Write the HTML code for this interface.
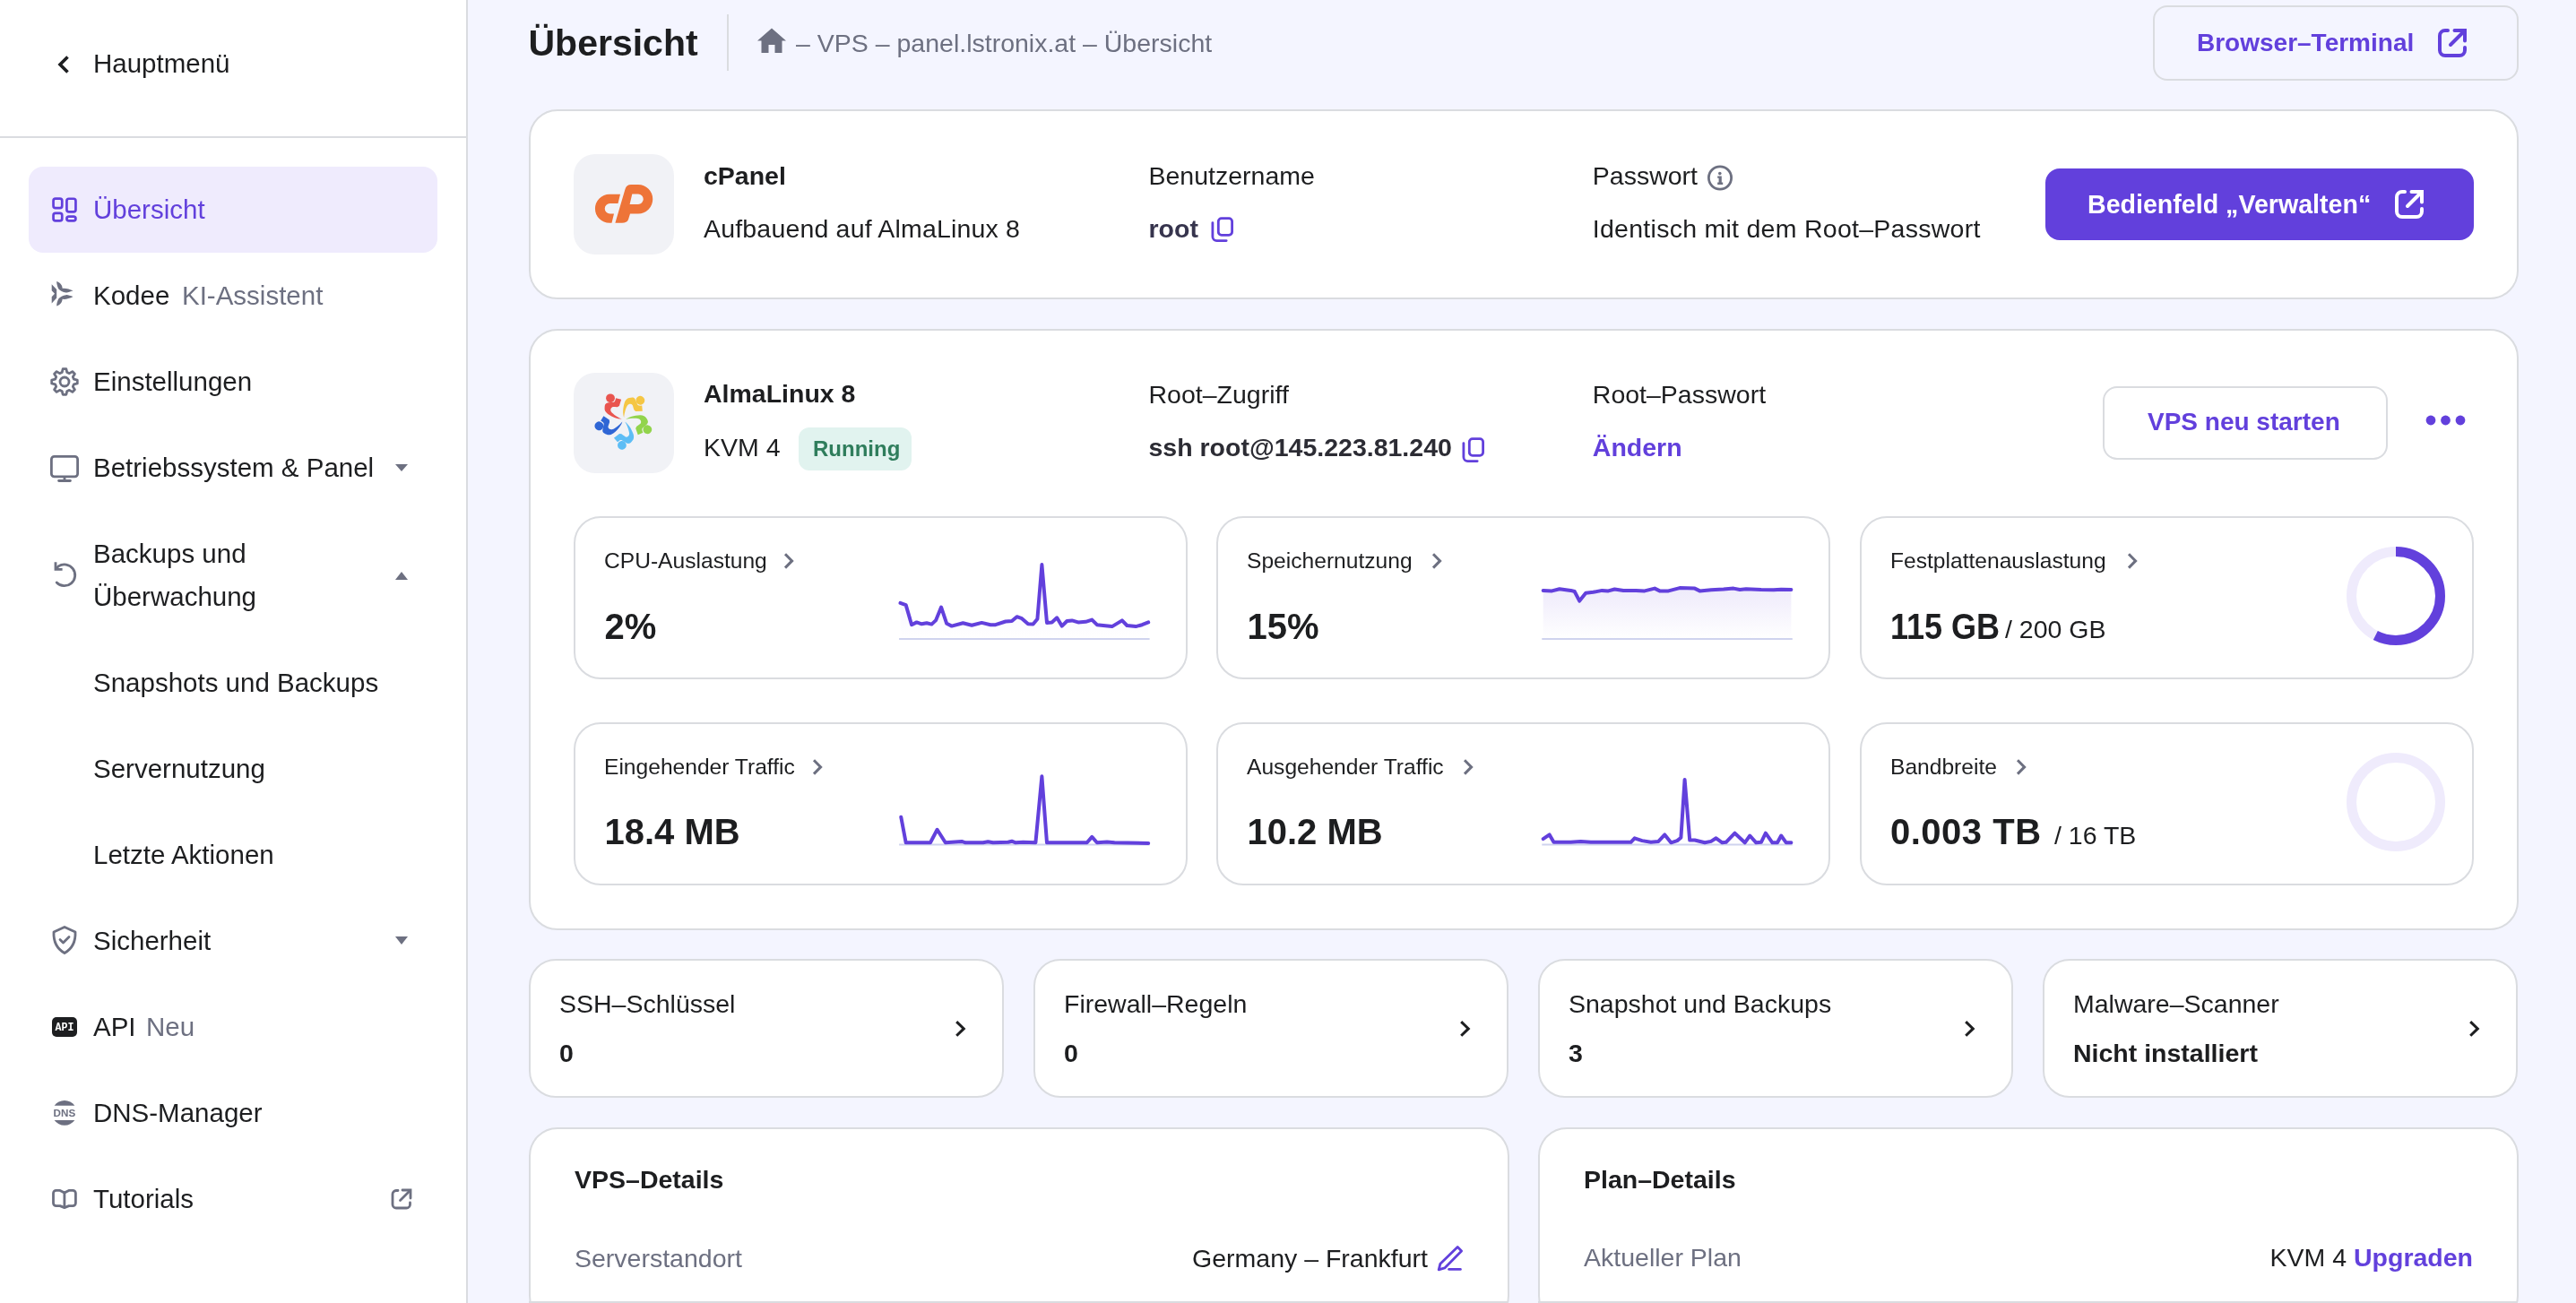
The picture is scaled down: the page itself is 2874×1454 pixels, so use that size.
<!DOCTYPE html>
<html><head><meta charset="utf-8"><title>Übersicht</title>
<style>
html,body{margin:0;padding:0;}
body{width:2874px;height:1454px;overflow:hidden;background:#f4f5ff;position:relative;font-family:"Liberation Sans",sans-serif;}
.t{position:absolute;white-space:nowrap;font-weight:400;}
.w{font-weight:700;}
.b{position:absolute;box-sizing:border-box;}
.s{position:absolute;}
svg{overflow:visible;}
</style></head><body>
<div id="root" style="position:absolute;left:0;top:0;width:2874px;height:1454px;will-change:transform;">
<div class="b" style="left:0px;top:0px;width:522px;height:1454px;background:#fff;border-right:2px solid #dadce0;"></div>
<div class="b" style="left:0px;top:152px;width:521px;height:2px;background:#dadce0;"></div>
<svg class="s" style="left:60px;top:58px;" width="24" height="28" viewBox="0 0 24 28" fill="none"><path d="M15.5 5.5 L7 14 L15.5 22.5" stroke="#1d1e20" stroke-width="3.6" stroke-linecap="butt" stroke-linejoin="miter"/></svg>
<div class="t" style="left:104.0px;top:56.0px;font-size:29.5px;line-height:29.5px;color:#1d1e20;">Hauptmenü</div>
<div class="b" style="left:32px;top:186px;width:456px;height:96px;background:#efebfd;border-radius:16px;"></div>
<svg class="s" style="left:56px;top:218px;" width="32" height="32" viewBox="0 0 32 32" fill="none"><g stroke="#6240dc" stroke-width="2.7"><rect x="3.55" y="3.55" width="9.7" height="10.5" rx="2.4"/><rect x="3.55" y="19.85" width="9.7" height="8.6" rx="2.4"/><rect x="18.45" y="3.75" width="10" height="14.7" rx="2.4"/><rect x="18.45" y="23.65" width="10" height="4.8" rx="2.4"/></g></svg>
<div class="t" style="left:104.0px;top:218.5px;font-size:29.5px;line-height:29.5px;color:#6240dc;">Übersicht</div>
<svg class="s" style="left:56px;top:313px;" width="30" height="32" viewBox="0 0 30 32" fill="none"><g fill="#6d7081"><path d="M1.7 4.2 L7.2 10 L7.2 19.6 L1.7 25.4 L1.7 18.3 L5 14.8 L1.7 11.3 Z"/><path d="M7.2 1.1 C11 2.5 13.5 5 13.6 8.8 C17 8.3 22 9.5 25.6 11.6 C22 12.5 19 14 17.6 13.4 C14 13 11 11 9.4 9.4 C8 7 7.2 4 7.2 1.1 Z"/><path d="M7.2 28.5 C11 27.1 13.5 24.6 13.6 20.8 C17 21.3 22 20.1 25.6 18 C22 17.1 19 15.6 17.6 16.2 C14 16.6 11 18.6 9.4 20.2 C8 22.6 7.2 25.6 7.2 28.5 Z"/></g></svg>
<div class="t" style="left:104.0px;top:314.5px;font-size:29.5px;line-height:29.5px;color:#1d1e20;">Kodee</div>
<div class="t" style="left:203.0px;top:314.5px;font-size:29.5px;line-height:29.5px;color:#6d7081;">KI-Assistent</div>
<svg class="s" style="left:55px;top:409px;" width="34" height="34" viewBox="0 0 34 34" fill="none"><g stroke="#6d7081" stroke-width="2.8" stroke-linejoin="round"><path d="M14.20 6.57 L15.12 2.72 L18.88 2.72 L19.80 6.57 L22.40 7.65 L25.77 5.58 L28.42 8.23 L26.35 11.60 L27.43 14.20 L31.28 15.12 L31.28 18.88 L27.43 19.80 L26.35 22.40 L28.42 25.77 L25.77 28.42 L22.40 26.35 L19.80 27.43 L18.88 31.28 L15.12 31.28 L14.20 27.43 L11.60 26.35 L8.23 28.42 L5.58 25.77 L7.65 22.40 L6.57 19.80 L2.72 18.88 L2.72 15.12 L6.57 14.20 L7.65 11.60 L5.58 8.23 L8.23 5.58 L11.60 7.65 Z"/><circle cx="17" cy="17" r="5"/></g></svg>
<div class="t" style="left:104.0px;top:410.5px;font-size:29.5px;line-height:29.5px;color:#1d1e20;">Einstellungen</div>
<svg class="s" style="left:55px;top:507px;" width="34" height="34" viewBox="0 0 34 34" fill="none"><g stroke="#6d7081" stroke-width="2.8"><rect x="2.4" y="2.4" width="29.2" height="22.5" rx="3.2"/><path d="M17 25 V29.5"/><path d="M10.6 29.5 H23.4" stroke-linecap="round"/></g></svg>
<div class="t" style="left:104.0px;top:506.5px;font-size:29.5px;line-height:29.5px;color:#1d1e20;">Betriebssystem &amp; Panel</div>
<svg class="s" style="left:440px;top:517px;" width="16" height="12" viewBox="0 0 16 12" fill="none"><path d="M1 1 H15 L8 9 Z" fill="#6d7081"/></svg>
<svg class="s" style="left:58px;top:625px;" width="30" height="32" viewBox="0 0 30 32" fill="none"><g stroke="#6d7081" stroke-width="2.8" fill="none"><path d="M4.8 9.6 L7.2 6.9 A11.9 11.9 0 1 1 5.2 25" stroke-linecap="round"/><path d="M4 2.2 V10.4 H11.6" stroke-linejoin="miter"/></g></svg>
<div class="t" style="left:104.0px;top:602.5px;font-size:29.5px;line-height:29.5px;color:#1d1e20;">Backups und</div>
<div class="t" style="left:104.0px;top:650.5px;font-size:29.5px;line-height:29.5px;color:#1d1e20;">Überwachung</div>
<svg class="s" style="left:440px;top:636px;" width="16" height="12" viewBox="0 0 16 12" fill="none"><path d="M1 11 H15 L8 2 Z" fill="#6d7081"/></svg>
<div class="t" style="left:104.0px;top:746.5px;font-size:29.5px;line-height:29.5px;color:#1d1e20;">Snapshots und Backups</div>
<div class="t" style="left:104.0px;top:842.5px;font-size:29.5px;line-height:29.5px;color:#1d1e20;">Servernutzung</div>
<div class="t" style="left:104.0px;top:938.5px;font-size:29.5px;line-height:29.5px;color:#1d1e20;">Letzte Aktionen</div>
<svg class="s" style="left:55px;top:1032px;" width="34" height="34" viewBox="0 0 34 34" fill="none"><g stroke="#6d7081" stroke-width="2.8" stroke-linejoin="round" stroke-linecap="round"><path d="M17 2.5 L29 8 C29.5 19 25 27 17 31.5 C9 27 4.5 19 5 8 Z"/><path d="M12 16.5 L15.5 20 L22 13.5"/></g></svg>
<div class="t" style="left:104.0px;top:1034.5px;font-size:29.5px;line-height:29.5px;color:#1d1e20;">Sicherheit</div>
<svg class="s" style="left:440px;top:1044px;" width="16" height="12" viewBox="0 0 16 12" fill="none"><path d="M1 1 H15 L8 10 Z" fill="#6d7081"/></svg>
<svg class="s" style="left:58px;top:1135px;" width="28" height="22" viewBox="0 0 28 22" fill="none"><rect x="0" y="0" width="28" height="22" rx="5" fill="#1d1e20"/><text x="3.6" y="15.3" textLength="21" lengthAdjust="spacingAndGlyphs" font-family="Liberation Mono" font-weight="700" font-size="12.5" fill="#fff">API</text></svg>
<div class="t" style="left:104.0px;top:1130.5px;font-size:29.5px;line-height:29.5px;color:#1d1e20;">API</div>
<div class="t" style="left:163.0px;top:1130.5px;font-size:29.5px;line-height:29.5px;color:#6d7081;">Neu</div>
<svg class="s" style="left:56px;top:1226px;" width="32" height="34" viewBox="0 0 32 34" fill="none"><g fill="#6d7081"><path d="M4.65 7.8 A14 14 0 0 1 27.35 7.8 Z"/><path d="M4.65 23.9 A14 14 0 0 0 27.35 23.9 Z"/></g><text x="3.6" y="20" textLength="24.6" lengthAdjust="spacingAndGlyphs" font-family="Liberation Sans" font-weight="700" font-size="11.3" fill="#6d7081">DNS</text></svg>
<div class="t" style="left:104.0px;top:1226.5px;font-size:29.5px;line-height:29.5px;color:#1d1e20;">DNS-Manager</div>
<svg class="s" style="left:56px;top:1325px;" width="32" height="28" viewBox="0 0 32 28" fill="none"><g stroke="#6d7081" stroke-width="2.8" stroke-linejoin="round"><path d="M15.9 6 L11 3.4 H6.7 A3.2 3.2 0 0 0 3.5 6.6 V17.4 A3.2 3.2 0 0 0 6.7 20.6 H11 L15.9 22.6 L20.8 20.6 H25.2 A3.2 3.2 0 0 0 28.4 17.4 V6.6 A3.2 3.2 0 0 0 25.2 3.4 H20.8 Z"/><path d="M15.9 6 V22.3"/></g></svg>
<div class="t" style="left:104.0px;top:1322.5px;font-size:29.5px;line-height:29.5px;color:#1d1e20;">Tutorials</div>
<svg class="s" style="left:435px;top:1325px;" width="26" height="26" viewBox="0 0 26 26" fill="none"><g stroke="#6d7081" stroke-width="2.8" stroke-linecap="round" fill="none"><path d="M9 3.5 H7 A4 4 0 0 0 3 7.5 V19 A4 4 0 0 0 7 23 H18.5 A4 4 0 0 0 22.5 19 V17"/><path d="M14 3 H23 V12"/><path d="M22.5 3.5 L11.5 14.5"/></g></svg>
<div class="t w" style="left:589.5px;top:27.8px;font-size:41px;line-height:41px;color:#1d1e20;">Übersicht</div>
<div class="b" style="left:811px;top:16px;width:2px;height:63px;background:#dadce0;"></div>
<svg class="s" style="left:843px;top:30px;" width="36" height="30" viewBox="0 0 36 30" fill="none"><path d="M18 1.5 L34 15.5 H29.5 V29 H21.5 V20 H14.5 V29 H6.5 V15.5 H2 Z" fill="#6d7081"/></svg>
<div class="t" style="left:888.0px;top:33.9px;font-size:28.5px;line-height:28.5px;color:#6d7081;">– VPS – panel.lstronix.at – Übersicht</div>
<div class="b" style="left:2402px;top:6px;width:408px;height:84px;border:2px solid #dadce0;border-radius:16px;"></div>
<div class="t w" style="left:2451.0px;top:33.8px;font-size:28px;line-height:28px;color:#6240dc;">Browser–Terminal</div>
<svg class="s" style="left:2720px;top:32px;" width="32" height="32" viewBox="0 0 32 32" fill="none"><g stroke="#6240dc" stroke-width="4" stroke-linecap="round" fill="none"><path d="M11 2 H8 A6 6 0 0 0 2 8 V24 A6 6 0 0 0 8 30 H24 A6 6 0 0 0 30 24 V21"/><path d="M18.5 2 H30 V13.5"/><path d="M29 3 L14 18"/></g></svg>
<div class="b" style="left:589.5px;top:122px;width:2220.5px;height:212px;background:#fff;border:2px solid #dadce0;border-radius:32px;"></div>
<div class="b" style="left:640px;top:172px;width:112px;height:112px;background:#f1f2f6;border-radius:24px;"></div>
<svg class="s" style="left:640px;top:172px;" width="112" height="112" viewBox="0 0 112 112" fill="none"><g fill="#ee7438"><path d="M52 44.7 L49.5 55 L40.5 55 A5.75 5.75 0 0 0 40.5 66.5 L45 66.5 L42.5 76.8 L40 76.8 A16 16 0 0 1 40 44.7 Z"/><path fill-rule="evenodd" d="M57.5 39 Q59 34 64 34 L72 34 A16.25 16.25 0 0 1 72 66.5 L63 66.5 L61 73 Q59.5 76.8 54 76.8 L46.4 76.8 Z M65.3 44.5 L72 44.5 A5.75 5.75 0 0 1 72 56 L62.6 56 Z"/></g></svg>
<div class="t w" style="left:785.0px;top:181.9px;font-size:28.5px;line-height:28.5px;color:#1d1e20;">cPanel</div>
<div class="t" style="left:785.0px;top:240.9px;font-size:28.5px;line-height:28.5px;color:#1d1e20;letter-spacing:0.18px">Aufbauend auf AlmaLinux 8</div>
<div class="t" style="left:1281.5px;top:181.9px;font-size:28.5px;line-height:28.5px;color:#1d1e20;">Benutzername</div>
<div class="t w" style="left:1281.5px;top:240.9px;font-size:28.5px;line-height:28.5px;color:#36344d;">root</div>
<svg class="s" style="left:1350px;top:241px;" width="28" height="30" viewBox="0 0 28 30" fill="none"><g stroke="#6240dc" stroke-width="2.8" fill="none" stroke-linecap="round"><rect x="9.3" y="2.6" width="15.3" height="18.7" rx="3.5"/><path d="M2.9 7.6 V23 A4.6 4.6 0 0 0 7.5 27.6 H18.2"/></g></svg>
<div class="t" style="left:1776.8px;top:181.9px;font-size:28.5px;line-height:28.5px;color:#1d1e20;">Passwort</div>
<svg class="s" style="left:1904px;top:184px;" width="30" height="30" viewBox="0 0 30 30" fill="none"><circle cx="15" cy="14.5" r="12.6" stroke="#6d7081" stroke-width="2.8"/><circle cx="14.8" cy="9.6" r="1.8" fill="#6d7081"/><path d="M12.2 12.6 H16.8 V19.6 H18.2 V22 H12.2 V19.6 H13.6 V14.8 H12.2 Z" fill="#6d7081"/></svg>
<div class="t" style="left:1776.8px;top:240.9px;font-size:28.5px;line-height:28.5px;color:#1d1e20;letter-spacing:0.27px">Identisch mit dem Root–Passwort</div>
<div class="b" style="left:2282px;top:188px;width:478px;height:80px;background:#6240dc;border-radius:16px;"></div>
<div class="t w" style="left:2329.0px;top:213.5px;font-size:28.6px;line-height:28.6px;color:#fff;">Bedienfeld „Verwalten“</div>
<svg class="s" style="left:2672px;top:212px;" width="32" height="32" viewBox="0 0 32 32" fill="none"><g stroke="#fff" stroke-width="4" stroke-linecap="round" fill="none"><path d="M11 2 H8 A6 6 0 0 0 2 8 V24 A6 6 0 0 0 8 30 H24 A6 6 0 0 0 30 24 V21"/><path d="M18.5 2 H30 V13.5"/><path d="M29 3 L14 18"/></g></svg>
<div class="b" style="left:589.5px;top:367px;width:2220.5px;height:671px;background:#fff;border:2px solid #dadce0;border-radius:32px;"></div>
<div class="b" style="left:640px;top:416px;width:112px;height:112px;background:#f1f2f6;border-radius:24px;"></div>
<svg class="s" style="left:640px;top:416px;" width="112" height="112" viewBox="0 0 112 112" fill="none"><g fill="#e9554f" transform="rotate(0 56 52.5)"><circle cx="41" cy="28.3" r="4.9"/><path d="M47.1 28.3 L53.1 29.7 L50.9 37.1 L48.7 38.2 C46 38.2 44 38 43.2 38.2 C41.2 39 40.6 42 42.1 43.8 C44 46 48.5 49.5 53.7 51.5 C50 51.8 44 50 38.2 46 C35.5 44 34.2 41.5 34.6 39.3 C34.6 37 35 35.5 35.5 34.9 C36.5 33.8 37.5 33.4 38.8 33.3 L44.9 32.7 C46 32 46.3 31 46.5 30.5 Z"/></g><g fill="#f5c644" transform="rotate(72 56 52.5)"><circle cx="41" cy="28.3" r="4.9"/><path d="M47.1 28.3 L53.1 29.7 L50.9 37.1 L48.7 38.2 C46 38.2 44 38 43.2 38.2 C41.2 39 40.6 42 42.1 43.8 C44 46 48.5 49.5 53.7 51.5 C50 51.8 44 50 38.2 46 C35.5 44 34.2 41.5 34.6 39.3 C34.6 37 35 35.5 35.5 34.9 C36.5 33.8 37.5 33.4 38.8 33.3 L44.9 32.7 C46 32 46.3 31 46.5 30.5 Z"/></g><g fill="#92d44c" transform="rotate(144 56 52.5)"><circle cx="41" cy="28.3" r="4.9"/><path d="M47.1 28.3 L53.1 29.7 L50.9 37.1 L48.7 38.2 C46 38.2 44 38 43.2 38.2 C41.2 39 40.6 42 42.1 43.8 C44 46 48.5 49.5 53.7 51.5 C50 51.8 44 50 38.2 46 C35.5 44 34.2 41.5 34.6 39.3 C34.6 37 35 35.5 35.5 34.9 C36.5 33.8 37.5 33.4 38.8 33.3 L44.9 32.7 C46 32 46.3 31 46.5 30.5 Z"/></g><g fill="#5dbdf5" transform="rotate(216 56 52.5)"><circle cx="41" cy="28.3" r="4.9"/><path d="M47.1 28.3 L53.1 29.7 L50.9 37.1 L48.7 38.2 C46 38.2 44 38 43.2 38.2 C41.2 39 40.6 42 42.1 43.8 C44 46 48.5 49.5 53.7 51.5 C50 51.8 44 50 38.2 46 C35.5 44 34.2 41.5 34.6 39.3 C34.6 37 35 35.5 35.5 34.9 C36.5 33.8 37.5 33.4 38.8 33.3 L44.9 32.7 C46 32 46.3 31 46.5 30.5 Z"/></g><g fill="#2f66d5" transform="rotate(288 56 52.5)"><circle cx="41" cy="28.3" r="4.9"/><path d="M47.1 28.3 L53.1 29.7 L50.9 37.1 L48.7 38.2 C46 38.2 44 38 43.2 38.2 C41.2 39 40.6 42 42.1 43.8 C44 46 48.5 49.5 53.7 51.5 C50 51.8 44 50 38.2 46 C35.5 44 34.2 41.5 34.6 39.3 C34.6 37 35 35.5 35.5 34.9 C36.5 33.8 37.5 33.4 38.8 33.3 L44.9 32.7 C46 32 46.3 31 46.5 30.5 Z"/></g></svg>
<div class="t w" style="left:785.0px;top:424.9px;font-size:28.5px;line-height:28.5px;color:#1d1e20;">AlmaLinux 8</div>
<div class="t" style="left:785.0px;top:484.9px;font-size:28.5px;line-height:28.5px;color:#1d1e20;">KVM 4</div>
<div class="b" style="left:891px;top:477px;width:126px;height:48px;background:#e1f3ef;border-radius:12px;"></div>
<div class="t w" style="left:907.0px;top:489.0px;font-size:24px;line-height:24px;color:#2f7d5c;">Running</div>
<div class="t" style="left:1281.5px;top:425.5px;font-size:28.5px;line-height:28.5px;color:#1d1e20;">Root–Zugriff</div>
<div class="t w" style="left:1281.5px;top:485.1px;font-size:28.5px;line-height:28.5px;color:#2c2c34;">ssh root@145.223.81.240</div>
<svg class="s" style="left:1630px;top:487px;" width="28" height="30" viewBox="0 0 28 30" fill="none"><g stroke="#6240dc" stroke-width="2.8" fill="none" stroke-linecap="round"><rect x="9.3" y="2.6" width="15.3" height="18.7" rx="3.5"/><path d="M2.9 7.6 V23 A4.6 4.6 0 0 0 7.5 27.6 H18.2"/></g></svg>
<div class="t" style="left:1776.8px;top:425.5px;font-size:28.5px;line-height:28.5px;color:#1d1e20;">Root–Passwort</div>
<div class="t w" style="left:1776.8px;top:485.1px;font-size:28.5px;line-height:28.5px;color:#6240dc;">Ändern</div>
<div class="b" style="left:2346px;top:431px;width:318px;height:82px;border:2px solid #dadce0;border-radius:16px;background:#fff;"></div>
<div class="t w" style="left:2396.0px;top:457.1px;font-size:28px;line-height:28px;color:#6240dc;">VPS neu starten</div>
<svg class="s" style="left:2705px;top:462px;" width="48" height="14" viewBox="0 0 48 14" fill="none"><g fill="#6240dc"><circle cx="7" cy="7" r="5.4"/><circle cx="23.5" cy="7" r="5.4"/><circle cx="40" cy="7" r="5.4"/></g></svg>
<div class="b" style="left:640px;top:576px;width:685px;height:182px;background:#fff;border:2px solid #dadce0;border-radius:30px;"></div>
<div class="t" style="left:674.0px;top:614.2px;font-size:24.6px;line-height:24.6px;color:#1d1e20;">CPU-Auslastung</div>
<svg class="s" style="left:872.6px;top:615.3px;" width="14" height="22" viewBox="0 0 14 22" fill="none"><path d="M3 3.2 L10.6 10.9 L3 18.6" stroke="#6d7081" stroke-width="3"/></svg>
<div class="b" style="left:1357px;top:576px;width:685px;height:182px;background:#fff;border:2px solid #dadce0;border-radius:30px;"></div>
<div class="t" style="left:1391.0px;top:614.2px;font-size:24.6px;line-height:24.6px;color:#1d1e20;">Speichernutzung</div>
<svg class="s" style="left:1596.1px;top:615.3px;" width="14" height="22" viewBox="0 0 14 22" fill="none"><path d="M3 3.2 L10.6 10.9 L3 18.6" stroke="#6d7081" stroke-width="3"/></svg>
<div class="b" style="left:2075px;top:576px;width:685px;height:182px;background:#fff;border:2px solid #dadce0;border-radius:30px;"></div>
<div class="t" style="left:2109.0px;top:614.2px;font-size:24.6px;line-height:24.6px;color:#1d1e20;">Festplattenauslastung</div>
<svg class="s" style="left:2371.9px;top:615.3px;" width="14" height="22" viewBox="0 0 14 22" fill="none"><path d="M3 3.2 L10.6 10.9 L3 18.6" stroke="#6d7081" stroke-width="3"/></svg>
<div class="b" style="left:640px;top:806px;width:685px;height:182px;background:#fff;border:2px solid #dadce0;border-radius:30px;"></div>
<div class="t" style="left:674.0px;top:844.2px;font-size:24.6px;line-height:24.6px;color:#1d1e20;">Eingehender Traffic</div>
<svg class="s" style="left:904.8000000000001px;top:845.3px;" width="14" height="22" viewBox="0 0 14 22" fill="none"><path d="M3 3.2 L10.6 10.9 L3 18.6" stroke="#6d7081" stroke-width="3"/></svg>
<div class="b" style="left:1357px;top:806px;width:685px;height:182px;background:#fff;border:2px solid #dadce0;border-radius:30px;"></div>
<div class="t" style="left:1391.0px;top:844.2px;font-size:24.6px;line-height:24.6px;color:#1d1e20;">Ausgehender Traffic</div>
<svg class="s" style="left:1630.8999999999999px;top:845.3px;" width="14" height="22" viewBox="0 0 14 22" fill="none"><path d="M3 3.2 L10.6 10.9 L3 18.6" stroke="#6d7081" stroke-width="3"/></svg>
<div class="b" style="left:2075px;top:806px;width:685px;height:182px;background:#fff;border:2px solid #dadce0;border-radius:30px;"></div>
<div class="t" style="left:2109.0px;top:844.2px;font-size:24.6px;line-height:24.6px;color:#1d1e20;">Bandbreite</div>
<svg class="s" style="left:2248.4px;top:845.3px;" width="14" height="22" viewBox="0 0 14 22" fill="none"><path d="M3 3.2 L10.6 10.9 L3 18.6" stroke="#6d7081" stroke-width="3"/></svg>
<div class="t w" style="left:674.5px;top:678.6px;font-size:40px;line-height:40px;color:#1d1e20;">2%</div>
<div class="t w" style="left:1391.5px;top:678.6px;font-size:40px;line-height:40px;color:#1d1e20;">15%</div>
<div class="t w" style="left:2109.0px;top:678.6px;font-size:40px;line-height:40px;color:#1d1e20;transform:scaleX(0.9);transform-origin:0 0">115 GB</div>
<div class="t" style="left:2237.0px;top:688.4px;font-size:28.5px;line-height:28.5px;color:#1d1e20;">/ 200 GB</div>
<div class="t w" style="left:674.5px;top:907.8px;font-size:40px;line-height:40px;color:#1d1e20;">18.4 MB</div>
<div class="t w" style="left:1391.5px;top:907.8px;font-size:40px;line-height:40px;color:#1d1e20;">10.2 MB</div>
<div class="t w" style="left:2109.0px;top:907.8px;font-size:40px;line-height:40px;color:#1d1e20;letter-spacing:0.5px">0.003 TB</div>
<div class="t" style="left:2292.0px;top:917.6px;font-size:28.5px;line-height:28.5px;color:#1d1e20;">/ 16 TB</div>
<svg class="s" style="left:999px;top:624px;" width="289" height="93" viewBox="0 0 289 93" fill="none"><defs><linearGradient id="g95" x1="0" y1="0" x2="0" y2="1"><stop offset="0" stop-color="#f0edfc"/><stop offset="1" stop-color="#ffffff"/></linearGradient></defs><path d="M5.5 48.9 L11.7 51.1 L18.1 73.2 L23.7 70.4 L29.3 72.3 L34.9 71.2 L40.4 72.6 L45.2 68.1 L51.1 53.6 L57.2 71.8 L62.8 74.6 L75.4 71.2 L85.2 73.7 L96.3 70.9 L106.1 73.2 L111.7 73.2 L122.9 69.5 L129.9 69.0 L135.5 64.2 L141.1 66.2 L148.0 72.3 L153.6 72.6 L158.4 66.7 L163.4 6.1 L169.0 70.9 L174.6 70.4 L180.2 65.3 L185.8 74.6 L191.4 69.0 L197.0 68.4 L203.9 70.4 L212.3 69.8 L219.3 67.6 L224.9 73.2 L231.9 74.0 L241.7 75.1 L252.9 68.4 L258.4 74.0 L268.2 75.1 L275.2 73.2 L282.2 70.4 L282.2 89.1 L5.5 89.1 Z" fill="url(#g95)"/><path d="M4.1 89.1 H283.6" stroke="#cfd3ee" stroke-width="2"/><path d="M5.5 48.9 L11.7 51.1 L18.1 73.2 L23.7 70.4 L29.3 72.3 L34.9 71.2 L40.4 72.6 L45.2 68.1 L51.1 53.6 L57.2 71.8 L62.8 74.6 L75.4 71.2 L85.2 73.7 L96.3 70.9 L106.1 73.2 L111.7 73.2 L122.9 69.5 L129.9 69.0 L135.5 64.2 L141.1 66.2 L148.0 72.3 L153.6 72.6 L158.4 66.7 L163.4 6.1 L169.0 70.9 L174.6 70.4 L180.2 65.3 L185.8 74.6 L191.4 69.0 L197.0 68.4 L203.9 70.4 L212.3 69.8 L219.3 67.6 L224.9 73.2 L231.9 74.0 L241.7 75.1 L252.9 68.4 L258.4 74.0 L268.2 75.1 L275.2 73.2 L282.2 70.4" stroke="#6240dc" stroke-width="4" stroke-linejoin="round" stroke-linecap="round" fill="none"/></svg>
<svg class="s" style="left:1716px;top:650px;" width="289" height="67" viewBox="0 0 289 67" fill="none"><defs><linearGradient id="g96" x1="0" y1="0" x2="0" y2="1"><stop offset="0" stop-color="#eeeafb"/><stop offset="1" stop-color="#ffffff"/></linearGradient></defs><path d="M5.7 8.9 L15.5 9.4 L23.9 7.2 L36.5 8.9 L40.7 10.0 L46.2 20.6 L53.2 11.7 L61.6 10.8 L71.4 8.9 L78.4 9.4 L85.4 7.5 L95.2 8.9 L109.1 8.9 L118.9 9.4 L130.1 6.6 L135.7 9.4 L145.5 9.4 L158.0 6.1 L174.8 6.6 L180.4 9.4 L193.0 8.3 L206.9 7.5 L218.1 6.6 L225.1 8.0 L232.1 7.2 L248.9 8.0 L262.8 8.3 L271.2 7.8 L282.4 8.0 L282.4 63.1 L5.7 63.1 Z" fill="url(#g96)"/><path d="M4.3 63.1 H283.8" stroke="#cfd3ee" stroke-width="2"/><path d="M5.7 8.9 L15.5 9.4 L23.9 7.2 L36.5 8.9 L40.7 10.0 L46.2 20.6 L53.2 11.7 L61.6 10.8 L71.4 8.9 L78.4 9.4 L85.4 7.5 L95.2 8.9 L109.1 8.9 L118.9 9.4 L130.1 6.6 L135.7 9.4 L145.5 9.4 L158.0 6.1 L174.8 6.6 L180.4 9.4 L193.0 8.3 L206.9 7.5 L218.1 6.6 L225.1 8.0 L232.1 7.2 L248.9 8.0 L262.8 8.3 L271.2 7.8 L282.4 8.0" stroke="#6240dc" stroke-width="4" stroke-linejoin="round" stroke-linecap="round" fill="none"/></svg>
<svg class="s" style="left:999px;top:860px;" width="289" height="86" viewBox="0 0 289 86" fill="none"><defs><linearGradient id="g97" x1="0" y1="0" x2="0" y2="1"><stop offset="0" stop-color="#f0edfc"/><stop offset="1" stop-color="#ffffff"/></linearGradient></defs><path d="M6.3 51.8 L11.7 80.3 L39.0 80.3 L46.6 65.8 L55.8 80.3 L74.0 78.9 L78.2 80.3 L97.7 80.3 L103.3 79.2 L108.9 80.3 L125.7 79.8 L129.9 78.7 L134.1 80.3 L142.5 79.8 L156.4 80.3 L163.4 6.3 L169.0 80.3 L213.7 80.3 L219.3 73.9 L224.9 80.3 L236.1 79.5 L244.5 80.3 L282.2 80.9 L282.2 82.6 L6.3 82.6 Z" fill="url(#g97)"/><path d="M4.1 82.6 H283.6" stroke="#cfd3ee" stroke-width="2"/><path d="M6.3 51.8 L11.7 80.3 L39.0 80.3 L46.6 65.8 L55.8 80.3 L74.0 78.9 L78.2 80.3 L97.7 80.3 L103.3 79.2 L108.9 80.3 L125.7 79.8 L129.9 78.7 L134.1 80.3 L142.5 79.8 L156.4 80.3 L163.4 6.3 L169.0 80.3 L213.7 80.3 L219.3 73.9 L224.9 80.3 L236.1 79.5 L244.5 80.3 L282.2 80.9" stroke="#6240dc" stroke-width="4" stroke-linejoin="round" stroke-linecap="round" fill="none"/></svg>
<svg class="s" style="left:1716px;top:863px;" width="289" height="83" viewBox="0 0 289 83" fill="none"><defs><linearGradient id="g98" x1="0" y1="0" x2="0" y2="1"><stop offset="0" stop-color="#f0edfc"/><stop offset="1" stop-color="#ffffff"/></linearGradient></defs><path d="M5.7 73.1 L12.7 68.4 L17.5 76.8 L36.5 76.8 L47.6 75.9 L58.8 76.8 L103.5 76.8 L107.7 72.3 L116.1 75.1 L125.9 76.8 L134.3 75.9 L141.3 68.4 L148.3 77.3 L155.2 75.1 L159.4 71.7 L163.6 6.9 L169.2 74.5 L174.8 74.5 L186.0 77.3 L193.0 75.9 L198.6 72.3 L205.5 77.3 L209.7 76.8 L219.5 66.7 L230.7 77.3 L236.3 69.5 L243.3 77.3 L248.9 76.8 L253.9 66.7 L261.4 77.3 L267.0 77.3 L271.2 69.5 L276.8 77.3 L282.4 77.3 L282.4 79.6 L5.7 79.6 Z" fill="url(#g98)"/><path d="M4.3 79.6 H283.8" stroke="#cfd3ee" stroke-width="2"/><path d="M5.7 73.1 L12.7 68.4 L17.5 76.8 L36.5 76.8 L47.6 75.9 L58.8 76.8 L103.5 76.8 L107.7 72.3 L116.1 75.1 L125.9 76.8 L134.3 75.9 L141.3 68.4 L148.3 77.3 L155.2 75.1 L159.4 71.7 L163.6 6.9 L169.2 74.5 L174.8 74.5 L186.0 77.3 L193.0 75.9 L198.6 72.3 L205.5 77.3 L209.7 76.8 L219.5 66.7 L230.7 77.3 L236.3 69.5 L243.3 77.3 L248.9 76.8 L253.9 66.7 L261.4 77.3 L267.0 77.3 L271.2 69.5 L276.8 77.3 L282.4 77.3" stroke="#6240dc" stroke-width="4" stroke-linejoin="round" stroke-linecap="round" fill="none"/></svg>
<svg class="s" style="left:2613px;top:605px;" width="120" height="120" viewBox="0 0 120 120" fill="none"><circle cx="60" cy="60" r="49.5" stroke="#efebfc" stroke-width="11"/><circle cx="60" cy="60" r="49.5" stroke="#6240dc" stroke-width="11" stroke-dasharray="178.8 311.0" transform="rotate(-90 60 60)"/></svg>
<svg class="s" style="left:2613px;top:835px;" width="120" height="120" viewBox="0 0 120 120" fill="none"><circle cx="60" cy="60" r="49.5" stroke="#efebfc" stroke-width="11"/></svg>
<div class="b" style="left:590px;top:1070px;width:530px;height:155px;background:#fff;border:2px solid #dadce0;border-radius:30px;"></div>
<div class="t" style="left:624.0px;top:1105.9px;font-size:28.5px;line-height:28.5px;color:#1d1e20;">SSH–Schlüssel</div>
<div class="t w" style="left:624.0px;top:1160.9px;font-size:28.5px;line-height:28.5px;color:#1d1e20;">0</div>
<svg class="s" style="left:1064px;top:1136px;" width="16" height="24" viewBox="0 0 16 24" fill="none"><path d="M3.2 4.1 L11.3 11.9 L3.2 19.8" stroke="#1d1e20" stroke-width="3" fill="none"/></svg>
<div class="b" style="left:1153px;top:1070px;width:530px;height:155px;background:#fff;border:2px solid #dadce0;border-radius:30px;"></div>
<div class="t" style="left:1187.0px;top:1105.9px;font-size:28.5px;line-height:28.5px;color:#1d1e20;">Firewall–Regeln</div>
<div class="t w" style="left:1187.0px;top:1160.9px;font-size:28.5px;line-height:28.5px;color:#1d1e20;">0</div>
<svg class="s" style="left:1627px;top:1136px;" width="16" height="24" viewBox="0 0 16 24" fill="none"><path d="M3.2 4.1 L11.3 11.9 L3.2 19.8" stroke="#1d1e20" stroke-width="3" fill="none"/></svg>
<div class="b" style="left:1716px;top:1070px;width:530px;height:155px;background:#fff;border:2px solid #dadce0;border-radius:30px;"></div>
<div class="t" style="left:1750.0px;top:1105.9px;font-size:28.5px;line-height:28.5px;color:#1d1e20;">Snapshot und Backups</div>
<div class="t w" style="left:1750.0px;top:1160.9px;font-size:28.5px;line-height:28.5px;color:#1d1e20;">3</div>
<svg class="s" style="left:2190px;top:1136px;" width="16" height="24" viewBox="0 0 16 24" fill="none"><path d="M3.2 4.1 L11.3 11.9 L3.2 19.8" stroke="#1d1e20" stroke-width="3" fill="none"/></svg>
<div class="b" style="left:2279px;top:1070px;width:530px;height:155px;background:#fff;border:2px solid #dadce0;border-radius:30px;"></div>
<div class="t" style="left:2313.0px;top:1105.9px;font-size:28.5px;line-height:28.5px;color:#1d1e20;">Malware–Scanner</div>
<div class="t w" style="left:2313.0px;top:1160.9px;font-size:28.5px;line-height:28.5px;color:#1d1e20;">Nicht installiert</div>
<svg class="s" style="left:2753px;top:1136px;" width="16" height="24" viewBox="0 0 16 24" fill="none"><path d="M3.2 4.1 L11.3 11.9 L3.2 19.8" stroke="#1d1e20" stroke-width="3" fill="none"/></svg>
<div class="b" style="left:589.5px;top:1258px;width:1094px;height:220px;background:#fff;border:2px solid #dadce0;border-radius:32px;"></div>
<div class="b" style="left:1716px;top:1258px;width:1094px;height:220px;background:#fff;border:2px solid #dadce0;border-radius:32px;"></div>
<div class="b" style="left:590px;top:1452px;width:1093px;height:2px;background:#dadce0;"></div>
<div class="b" style="left:1716px;top:1452px;width:1093px;height:2px;background:#dadce0;"></div>
<div class="t w" style="left:641.0px;top:1301.5px;font-size:28.5px;line-height:28.5px;color:#1d1e20;">VPS–Details</div>
<div class="t" style="left:641.0px;top:1389.9px;font-size:28.5px;line-height:28.5px;color:#6d7081;">Serverstandort</div>
<div class="t" style="right:1281.0px;top:1389.9px;font-size:28.5px;line-height:28.5px;color:#1d1e20;">Germany – Frankfurt</div>
<svg class="s" style="left:1601px;top:1388px;" width="32" height="32" viewBox="0 0 32 32" fill="none"><g stroke="#6240dc" stroke-width="2.8" stroke-linejoin="round" stroke-linecap="round" fill="none"><path d="M4.2 28.8 L5.9 22.2 L25.2 3.4 L29.6 7.9 L10.8 26.9 Z"/><path d="M15.6 28.4 H28.4"/></g></svg>
<div class="t w" style="left:1767.0px;top:1301.6px;font-size:28.5px;line-height:28.5px;color:#1d1e20;">Plan–Details</div>
<div class="t" style="left:1767.0px;top:1389.1px;font-size:28.5px;line-height:28.5px;color:#6d7081;">Aktueller Plan</div>
<div class="t" style="right:115.0px;top:1389.1px;font-size:28.5px;line-height:28.5px;color:#1d1e20;">KVM 4 <span style="color:#6240dc;font-weight:700">Upgraden</span></div>
</div>
</body></html>
